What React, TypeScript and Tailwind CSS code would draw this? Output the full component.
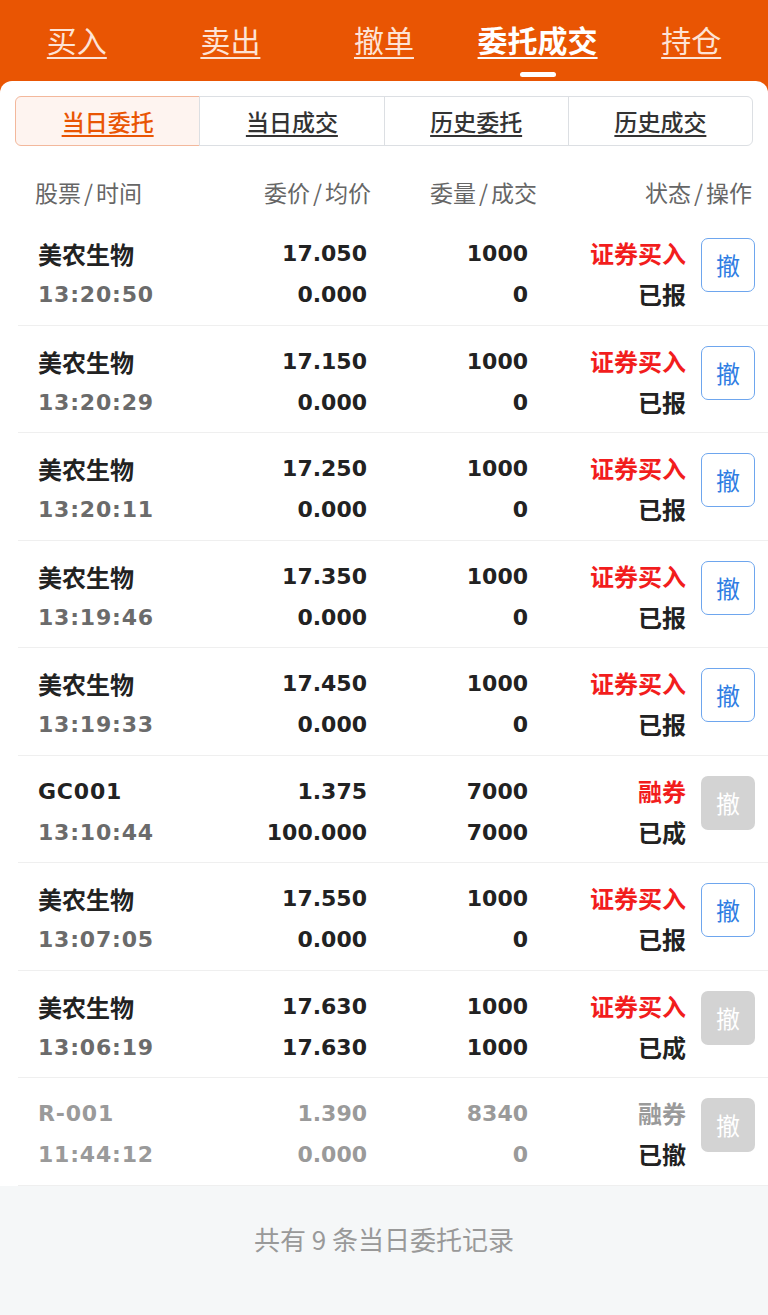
type Order = {
  name: string;
  time: string;
  price: string;
  avg: string;
  qty: string;
  filled: string;
  type: string;
  status: string;
  canCancel: boolean;
  cancelled?: boolean;
};

const orders: Order[] = [
  { name: "美农生物", time: "13:20:50", price: "17.050", avg: "0.000", qty: "1000", filled: "0", type: "证券买入", status: "已报", canCancel: true },
  { name: "美农生物", time: "13:20:29", price: "17.150", avg: "0.000", qty: "1000", filled: "0", type: "证券买入", status: "已报", canCancel: true },
  { name: "美农生物", time: "13:20:11", price: "17.250", avg: "0.000", qty: "1000", filled: "0", type: "证券买入", status: "已报", canCancel: true },
  { name: "美农生物", time: "13:19:46", price: "17.350", avg: "0.000", qty: "1000", filled: "0", type: "证券买入", status: "已报", canCancel: true },
  { name: "美农生物", time: "13:19:33", price: "17.450", avg: "0.000", qty: "1000", filled: "0", type: "证券买入", status: "已报", canCancel: true },
  { name: "GC001", time: "13:10:44", price: "1.375", avg: "100.000", qty: "7000", filled: "7000", type: "融券", status: "已成", canCancel: false },
  { name: "美农生物", time: "13:07:05", price: "17.550", avg: "0.000", qty: "1000", filled: "0", type: "证券买入", status: "已报", canCancel: true },
  { name: "美农生物", time: "13:06:19", price: "17.630", avg: "17.630", qty: "1000", filled: "1000", type: "证券买入", status: "已成", canCancel: false },
  { name: "R-001", time: "11:44:12", price: "1.390", avg: "0.000", qty: "8340", filled: "0", type: "融券", status: "已撤", canCancel: false, cancelled: true },
];

const topTabs = ["买入", "卖出", "撤单", "委托成交", "持仓"];
const subTabs = ["当日委托", "当日成交", "历史委托", "历史成交"];

const num = "font-['DejaVu_Sans','Noto_Sans_CJK_SC',sans-serif] text-[22px] font-bold";
const cjk = "font-['Noto_Sans_CJK_SC',sans-serif] text-[24px] font-bold";

function Label({ a, b }: { a: string; b: string }) {
  return (
    <span>
      {a}
      <span className="mx-[3px]">/</span>
      {b}
    </span>
  );
}

function OrderRow({ o }: { o: Order }) {
  const dim = o.cancelled;
  const isCjkName = /[\u4e00-\u9fff]/.test(o.name);
  return (
    <div className="ml-[18px] h-[107.5px] border-b border-[#efefef]">
      <div className="flex items-start pl-[20px] pr-[13px] pt-[15px]">
        <div className="flex w-[200px] flex-col leading-[41px]">
          <span className={`${isCjkName ? cjk : `${num} tracking-[0.8px]`} ${dim ? "text-[#9a9a9a]" : "text-[#222]"}`}>
            {o.name}
          </span>
          <span className={`${num} tracking-[0.8px] ${dim ? "text-[#9a9a9a]" : "text-[#6b6b6b]"}`}>{o.time}</span>
        </div>
        <div className={`flex w-[129px] flex-col items-end leading-[41px] ${num} ${dim ? "text-[#9a9a9a]" : "text-[#222]"}`}>
          <span>{o.price}</span>
          <span>{o.avg}</span>
        </div>
        <div className={`flex w-[161px] flex-col items-end leading-[41px] ${num} ${dim ? "text-[#9a9a9a]" : "text-[#222]"}`}>
          <span>{o.qty}</span>
          <span>{o.filled}</span>
        </div>
        <div className={`-mt-[1px] flex w-[158px] flex-col items-end leading-[41px] ${cjk}`}>
          <span className={dim ? "text-[#9a9a9a]" : "text-[#f21d1d]"}>{o.type}</span>
          <span className="text-[#222]">{o.status}</span>
        </div>
        <div className="ml-[15px] mt-[5px]">
          {o.canCancel ? (
            <button
              type="button"
              className="flex h-[54px] w-[54px] items-center justify-center rounded-[7px] border-[1.5px] border-[#6ea6ee] bg-white font-['Noto_Sans_CJK_SC',sans-serif] text-[24px] text-[#2f7de3]"
            >
              撤
            </button>
          ) : (
            <button
              type="button"
              disabled
              className="flex h-[54px] w-[54px] items-center justify-center rounded-[7px] bg-[#d3d3d3] font-['Noto_Sans_CJK_SC',sans-serif] text-[24px] text-white"
            >
              撤
            </button>
          )}
        </div>
      </div>
    </div>
  );
}

export default function App() {
  return (
    <div className="flex min-h-screen flex-col bg-[#e95503] font-['Noto_Sans_CJK_SC',sans-serif]">
      {/* top tabs */}
      <div className="flex h-[81px]">
        {topTabs.map((t, i) => {
          const active = i === 3;
          return (
            <div key={t} className="flex flex-1 flex-col items-center pt-[20px]">
              <span
                className={`text-[30px] leading-[38px] underline decoration-2 underline-offset-[5px] ${
                  active ? "font-bold text-white" : "text-[#fde3d6]"
                }`}
              >
                {t}
              </span>
              <span className={`mt-[14px] h-[5px] w-[36px] rounded-full ${active ? "bg-white" : "bg-transparent"}`} />
            </div>
          );
        })}
      </div>

      {/* card */}
      <div className="flex flex-1 flex-col rounded-t-[12px] bg-white">
        <div className="mx-[15px] mt-[15px] flex h-[50px]">
          {subTabs.map((t, i) => {
            const active = i === 0;
            return (
              <div
                key={t}
                className={`flex flex-1 items-center justify-center border text-[23px] font-medium underline decoration-[1.5px] underline-offset-[4px] ${
                  active
                    ? "rounded-l-[6px] border-[#f3b89c] bg-[#fef4f0] text-[#e95503]"
                    : "-ml-px border-[#dcdfe3] text-[#333]"
                } ${i === subTabs.length - 1 ? "rounded-r-[6px]" : ""}`}
              >
                {t}
              </div>
            );
          })}
        </div>

        {/* column header */}
        <div className="flex h-[72px] pl-[35px] pr-[16px] pt-[29px] text-[23px] leading-[34px] text-[#666]">
          <div className="w-[200px]">
            <Label a="股票" b="时间" />
          </div>
          <div className="w-[136px] text-right">
            <Label a="委价" b="均价" />
          </div>
          <div className="w-[166px] text-right">
            <Label a="委量" b="成交" />
          </div>
          <div className="w-[215px] text-right">
            <Label a="状态" b="操作" />
          </div>
        </div>

        {orders.map((o, i) => (
          <OrderRow key={i} o={o} />
        ))}

        <div className="flex flex-1 items-start justify-center bg-[#f5f7f8] pt-[35px] text-[26px] leading-[36px] text-[#999]">
          共有 9 条当日委托记录
        </div>
      </div>
    </div>
  );
}
